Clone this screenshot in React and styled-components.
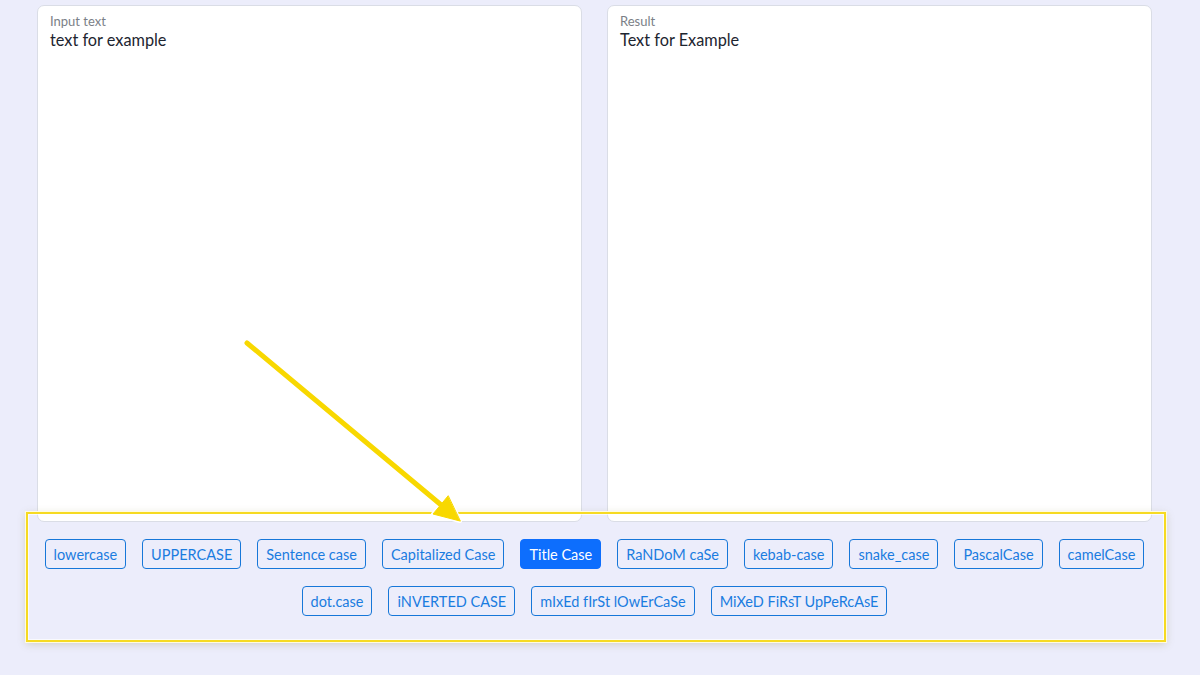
import React, { useState } from 'react'
import styled, { createGlobalStyle } from "styled-components";

const GlobalStyle = createGlobalStyle`
    html, body {
        margin: 0;
        padding: 0;
        background: #ecedfb;
        font-family: Lato, "Noto Sans", sans-serif;
    }
`;

const Page = styled.div`
    position: relative;
    width: 1200px;
    height: 675px;
    overflow: hidden;
    box-sizing: border-box;
    padding: 5px 48px 0 37px;
`;
const Panels = styled.div`
    display: grid;
    grid-template-columns: 1fr 1fr;
    gap: 25px;
`;
const Panel = styled.div`
    background: #fff;
    border: 1px solid #dadde6;
    border-radius: 7px;
    height: 517px;
    box-sizing: border-box;
    padding: 7px 12px;
`;
const Label = styled.div`
    font-size: 13px;
    color: #7b7f87;
    line-height: 16px;
`;
const Value = styled.div`
    font-size: 16.3px;
    color: #1d2530;
    line-height: 22px;
`;
const Buttons = styled.div`
    display: flex;
    flex-wrap: wrap;
    justify-content: center;
    column-gap: 16px;
    row-gap: 17px;
    padding: 17px 0 0;
`;
const CaseButton = styled.button`
    font-family: inherit;
    font-size: 14.5px;
    height: 30px;
    padding: 0 8px;
    border-radius: 4px;
    cursor: pointer;
    border: 1px solid ${({active}) => (active ? "#0d6efd" : "#1677d9")};
    background: ${({active}) => (active ? "#0d6efd" : "transparent")};
    color: ${({active}) => (active ? "#fff" : "#1a7ce0")};
`;
const Highlight = styled.div`
    position: absolute;
    left: 26px;
    top: 512px;
    width: 1140px;
    height: 130px;
    box-sizing: border-box;
    border: 2px solid #f6da22;
    box-shadow: 0 0 0 1px #fffbe0, 0 2px 8px rgba(120, 110, 40, 0.25), inset 0 0 0 1px rgba(255,255,255,0.7);
    pointer-events: none;
`;
const Arrow = styled.svg`
    position: absolute;
    left: 0;
    top: 0;
    pointer-events: none;
`;

const cases = [
    "lowercase", "UPPERCASE", "Sentence case", "Capitalized Case", "Title Case",
    "RaNDoM caSe", "kebab-case", "snake_case", "PascalCase", "camelCase",
    "dot.case", "iNVERTED CASE", "mIxEd fIrSt lOwErCaSe", "MiXeD FiRsT UpPeRcAsE"
];

const App = () => {
  const [selected, setSelected] = useState("Title Case");
  return <Page>
    <GlobalStyle/>
    <Panels>
        <Panel>
            <Label>Input text</Label>
            <Value>text for example</Value>
        </Panel>
        <Panel>
            <Label>Result</Label>
            <Value>Text for Example</Value>
        </Panel>
    </Panels>
    <Buttons>
        {cases.map(c => (
            <CaseButton key={c} active={c === selected} onClick={() => setSelected(c)}>{c}</CaseButton>
        ))}
    </Buttons>
    <Highlight/>
    <Arrow width="1200" height="675">
        <g strokeLinecap="round" strokeLinejoin="round">
            <line x1="247" y1="343" x2="440" y2="504" stroke="#fff" strokeWidth="8"/>
            <polygon points="460,521 433,514 448,496" fill="#fff" stroke="#fff" strokeWidth="4"/>
            <line x1="247" y1="343" x2="440" y2="504" stroke="#f8d800" strokeWidth="5"/>
            <polygon points="460,521 433,514 448,496" fill="#f8d800" stroke="#f8d800" strokeWidth="1"/>
        </g>
    </Arrow>
  </Page>
};

export default App;
